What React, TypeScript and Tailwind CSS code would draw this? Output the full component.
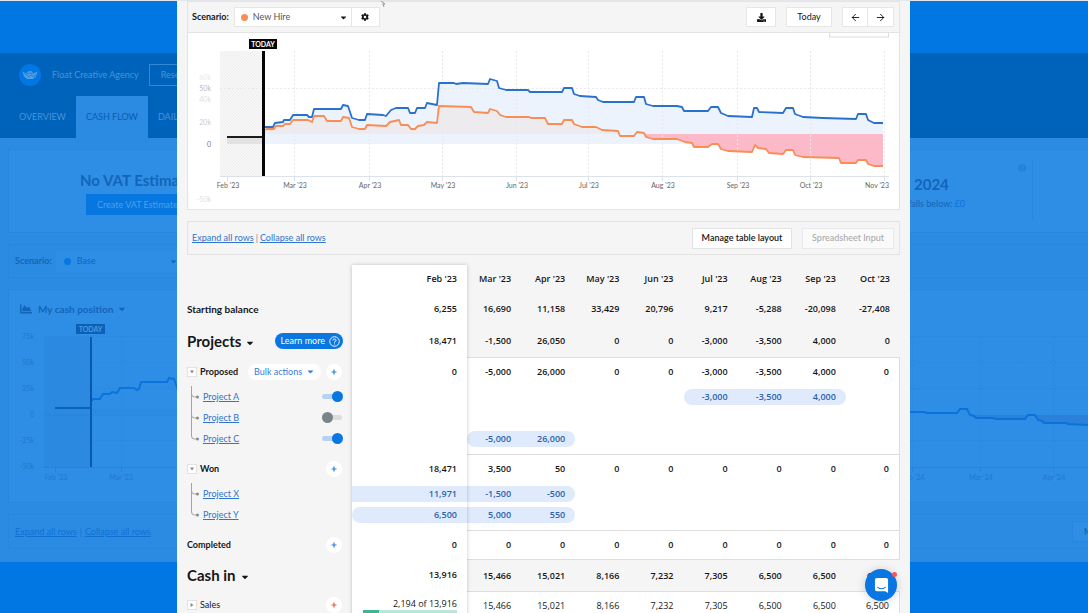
import React from 'react';
import { FaCog, FaDownload, FaCaretDown, FaChartArea } from 'react-icons/fa';
import { ArrowLeft, ArrowRight } from 'lucide-react';

type Line = [number, number][];

interface Row {
  kind: 'header' | 'balance' | 'section' | 'group' | 'project' | 'line';
  label: string;
  values: string[];
  add?: boolean;
  on?: boolean;
  last?: boolean;
  // first and last month that the project covers
  span?: [number, number];
  continued?: boolean;
}

const months = ["Feb '23", "Mar '23", "Apr '23", "May '23", "Jun '23", "Jul '23", "Aug '23", "Sep '23", "Oct '23"];

const rows: Row[] = [
  { kind: 'balance', label: 'Starting balance', values: ['6,255', '16,690', '11,158', '33,429', '20,796', '9,217', '-5,288', '-20,098', '-27,408'] },
  { kind: 'section', label: 'Projects', values: ['18,471', '-1,500', '26,050', '0', '0', '-3,000', '-3,500', '4,000', '0'] },
  { kind: 'group', label: 'Proposed', add: true, values: ['0', '-5,000', '26,000', '0', '0', '-3,000', '-3,500', '4,000', '0'] },
  { kind: 'project', label: 'Project A', on: true, span: [5, 7], values: ['', '', '', '', '', '-3,000', '-3,500', '4,000', ''] },
  { kind: 'project', label: 'Project B', on: false, values: ['', '', '', '', '', '', '', '', ''] },
  { kind: 'project', label: 'Project C', on: true, last: true, span: [1, 2], values: ['', '-5,000', '26,000', '', '', '', '', '', ''] },
  { kind: 'group', label: 'Won', add: true, values: ['18,471', '3,500', '50', '0', '0', '0', '0', '0', '0'] },
  { kind: 'project', label: 'Project X', span: [0, 2], continued: true, values: ['11,971', '-1,500', '-500', '', '', '', '', '', ''] },
  { kind: 'project', label: 'Project Y', last: true, span: [0, 2], values: ['6,500', '5,000', '550', '', '', '', '', '', ''] },
  { kind: 'group', label: 'Completed', add: true, values: ['0', '0', '0', '0', '0', '0', '0', '0', '0'] },
  { kind: 'section', label: 'Cash in', values: ['13,916', '15,466', '15,021', '8,166', '7,232', '7,305', '6,500', '6,500', '6,500'] },
  { kind: 'line', label: 'Sales', values: ['2,194 of 13,916', '15,466', '15,021', '8,166', '7,232', '7,305', '6,500', '6,500', '6,500'] },
];

const baseLine: Line = [
  [77, 94], [86, 94], [88, 90], [96, 89], [97, 87], [103, 87], [106, 82], [120, 82], [122, 84], [125, 84], [127, 76], [154, 76],
  [156, 72], [161, 73], [165, 85], [172, 87], [178, 87], [180, 81], [196, 82], [199, 83], [204, 77], [209, 75], [221, 75], [223, 80],
  [228, 80], [230, 75], [238, 75], [240, 70], [250, 72], [252, 50], [267, 50], [269, 51], [276, 50], [301, 51], [303, 46], [310, 48],
  [312, 55], [319, 57], [341, 57], [343, 59], [375, 59], [377, 55], [385, 55], [387, 61], [393, 63], [409, 64], [411, 67], [416, 69],
  [447, 69], [449, 64], [457, 64], [459, 71], [466, 73], [490, 73], [495, 74], [497, 78], [521, 78], [524, 74], [531, 74], [534, 80],
  [541, 83], [565, 84], [567, 75], [570, 75], [572, 79], [596, 80], [599, 75], [606, 75], [608, 81], [616, 84], [636, 85], [669, 86],
  [671, 81], [679, 81], [681, 87], [687, 90], [696, 90],
];

const hireLine: Line = [
  [77, 97], [80, 96], [87, 96], [89, 93], [96, 93], [98, 91], [103, 91], [106, 87], [121, 87], [125, 89], [127, 83], [137, 83],
  [140, 88], [154, 88], [156, 84], [162, 85], [165, 94], [172, 96], [178, 96], [180, 92], [199, 93], [203, 89], [212, 87], [214, 92],
  [221, 92], [224, 96], [228, 96], [231, 93], [237, 92], [240, 89], [250, 90], [252, 73], [284, 74], [287, 79], [301, 80], [303, 76],
  [310, 78], [313, 82], [319, 84], [342, 84], [344, 85], [358, 85], [361, 91], [375, 91], [377, 87], [385, 87], [387, 91], [395, 94],
  [409, 94], [415, 97], [431, 98], [433, 103], [447, 103], [450, 99], [457, 100], [459, 104], [466, 106], [490, 106], [498, 109],
  [505, 110], [507, 114], [521, 114], [525, 111], [531, 111], [534, 116], [541, 118], [565, 119], [568, 112], [571, 115], [579, 116],
  [582, 120], [596, 121], [599, 117], [606, 117], [608, 122], [616, 124], [652, 125], [654, 130], [669, 130], [671, 127], [679, 127],
  [681, 131], [687, 133], [696, 133],
];

const ticks: [number, string][] = [
  [40, "Feb '23"], [107, "Mar '23"], [182, "Apr '23"], [255, "May '23"], [329, "Jun '23"],
  [401, "Jul '23"], [475, "Aug '23"], [550, "Sep '23"], [623, "Oct '23"], [697, "Nov '23"],
];

const yLabels: [number, string, string][] = [
  [44, '60k', '#e9e9e9'], [55, '50k', '#b9b9b9'], [66, '40k', '#dddddd'], [89, '20k', '#cccccc'], [111, '0', '#777777'], [166, '-50k', '#dddddd'],
];

const toPoints = (line: Line) => line.map((p) => p.join(',')).join(' ');

const CashChart: React.FC = () => {
  const hireAbove = hireLine.filter(([x]) => x <= 431);
  const hireBelow = hireLine.filter(([x]) => x >= 459);
  return (
    <svg viewBox="1 0 711 176" className="block w-full" role="img" aria-label="Cash position chart">
      <defs>
        <pattern id="past" width="3" height="3" patternUnits="userSpaceOnUse">
          <path d="M0 3L3 0" stroke="#e6e6e6" strokeWidth="0.6" />
        </pattern>
      </defs>
      <rect x="642.500" y="-6" width="59" height="10" fill="#fff" stroke="#dcdcdc" />
      <rect x="33" y="18" width="43" height="125" fill="#f7f7f7" />
      <rect x="33" y="18" width="43" height="125" fill="url(#past)" />
      <rect x="40" y="104" width="36" height="7" fill="#e2e2e2" />
      <polygon points={`77,111 ${toPoints(baseLine)} 696,111`} fill="#ecf3fd" />
      <polygon points={`77,101 ${toPoints(hireAbove)} 433,101`} fill="#eeebee" />
      <polygon points={`457,101 ${toPoints(hireBelow)} 696,101`} fill="#fcb9c8" />
      <g stroke="#e6e9ee" strokeDasharray="2 2">
        {ticks.slice(1).map(([x]) => (
          <path key={x} d={`M${x}.5 18V143`} />
        ))}
        <path d="M33 55.500H697" />
      </g>
      <path d="M33 143.500H702" stroke="#dde1ea" />
      <g stroke="#dde1ea">
        {ticks.map(([x]) => (
          <path key={x} d={`M${x}.5 143v5`} />
        ))}
      </g>
      <polyline points={toPoints(baseLine)} fill="none" stroke="#2a70cd" strokeWidth="1.8" strokeLinejoin="round" />
      <polyline points={toPoints(hireLine)} fill="none" stroke="#f88d55" strokeWidth="1.8" strokeLinejoin="round" />
      <path d="M40 104H76" stroke="#1c1c1e" strokeWidth="2" />
      <rect x="75" y="18" width="3" height="125" fill="#050507" />
      <rect x="62" y="6" width="28" height="10" fill="#050507" />
      <text x="76" y="14" textAnchor="middle" fontSize="7" fontWeight="700" fill="#fff">TODAY</text>
      <g fontSize="7" fill="#666">
        {ticks.map(([x, label], i) => (
          <text key={label} x={i === ticks.length - 1 ? 702 : x + 1} y="155" textAnchor={i === ticks.length - 1 ? 'end' : 'middle'}>{label}</text>
        ))}
      </g>
      <g fontSize="7" textAnchor="end">
        {yLabels.map(([y, label, fill]) => (
          <text key={label} x="24" y={y + 3} fill={fill}>{label}</text>
        ))}
      </g>
    </svg>
  );
};

const TreeBranch: React.FC<{ last?: boolean }> = ({ last }) => (
  <svg viewBox="0 0 16 21" className="w-4 h-[21px] shrink-0" fill="none" stroke="#a3a3a3">
    <path d={last ? 'M4.500 0V8q0 3 3 3H10' : 'M4.500 0V21M4.500 8q0 3 3 3H10'} />
    <circle cx="10.500" cy="11" r="1.500" fill="#8b8b8b" stroke="none" />
  </svg>
);

const AddButton: React.FC<{ label: string; red?: boolean }> = ({ label, red }) => (
  <button aria-label={`Add to ${label}`} className={`ml-auto mr-[10px] size-4 rounded-full bg-white flex items-center justify-center ${red ? 'text-[#e0603f]' : 'text-[#2a7fdc]'}`}>
    <svg viewBox="0 0 6 6" className="size-[6px]" stroke="currentColor" strokeWidth="1.200">
      <path d="M3 0.500v5M0.500 3h5" />
    </svg>
  </button>
);

const Expander: React.FC<{ open: boolean; label: string }> = ({ open, label }) => (
  <button aria-label={`Toggle ${label}`} className="size-[10px] mr-[3px] bg-white border border-[#e2e2e2] flex items-center justify-center">
    <svg viewBox="0 0 6 6" className="size-[6px]" fill="#888">
      <path d={open ? 'M1 1.500h4L3 4.500z' : 'M1.500 1v4L4.500 3z'} />
    </svg>
  </button>
);

const RowLabel: React.FC<{ row: Row }> = ({ row }) => {
  if (row.kind === 'section') {
    return (
      <div className="flex items-center">
        <span className="text-[15px]">{row.label}</span>
        <FaCaretDown className="size-[10px] ml-1 mt-1" />
        {row.label === 'Projects' && (
          <button className="ml-auto mr-[9px] h-4 pl-[6px] pr-[3px] rounded-full bg-[#0a76e2] text-white text-[9px] font-normal flex items-center gap-1">
            Learn more
            <svg viewBox="0 0 12 12" className="size-[11px]" fill="none" stroke="#fff">
              <circle cx="6" cy="6" r="5.200" />
              <path d="M4.300 4.800Q4.300 3.200 6 3.200T7.700 4.800Q7.700 5.800 6 6.300V7.200M6 8.200v1" />
            </svg>
          </button>
        )}
      </div>
    );
  }
  if (row.kind === 'project') {
    return (
      <div className="flex items-center h-[21px]">
        <TreeBranch last={row.last} />
        <a href="#" className="text-[9px] font-normal text-[#2f74cf] underline">{row.label}</a>
        {row.on !== undefined && (
          <input
            type="checkbox"
            role="switch"
            aria-label={`Include ${row.label}`}
            defaultChecked={row.on}
            className="appearance-none ml-auto mr-[10px] relative w-5 h-[5px] rounded-full bg-[#dcdcdc] checked:bg-[#b5d2f3] before:absolute before:-top-[3px] before:left-0 checked:before:left-[10px] before:size-[11px] before:rounded-full before:bg-[#7b8488] checked:before:bg-[#0a76e2]"
          />
        )}
      </div>
    );
  }
  return (
    <div className="flex items-center">
      {(row.kind === 'line' || row.label === 'Proposed' || row.label === 'Won') && <Expander open={row.kind !== 'line'} label={row.label} />}
      <span className={row.kind === 'balance' ? 'text-[10px]' : row.kind === 'line' ? 'text-[9px] font-normal' : 'text-[9px]'}>{row.label}</span>
      {row.label === 'Proposed' && (
        <button className="ml-[10px] h-4 px-[6px] rounded-full bg-white text-[9px] font-normal text-[#2f7bd9] flex items-center gap-1">
          Bulk actions
          <FaCaretDown className="size-[9px]" />
        </button>
      )}
      {(row.add || row.kind === 'line') && <AddButton label={row.label} red={row.kind === 'line'} />}
    </div>
  );
};

const rowHeight = {
  header: 'h-7',
  balance: 'h-8',
  section: 'h-8',
  group: 'h-[29px]',
  project: 'h-[21px]',
  line: 'h-7',
};

const CashTable: React.FC = () => (
  <div className="relative mt-[10px]">
    <table className="w-full table-fixed border-separate border-spacing-0 text-[9px] text-[#161618]">
      <colgroup>
        <col className="w-[165px]" />
        <col className="w-[115px]" />
        {months.slice(1).map((m) => <col key={m} />)}
      </colgroup>
      <thead>
        <tr className="font-['Open_Sans',sans-serif]">
          <td className="h-7" />
          {months.map((month, i) => (
            <th key={month} scope="col" className={`h-7 pr-[10px] text-right font-semibold ${i === 0 ? 'bg-white' : ''}`}>{month}</th>
          ))}
        </tr>
      </thead>
      <tbody>
        {rows.map((row) => {
          const white = row.kind !== 'balance' && row.kind !== 'section';
          const ruled = row.kind === 'group' || row.kind === 'line' || row.label === 'Cash in';
          return (
            <tr key={row.label}>
              <th scope="row" className={`p-0 text-left font-bold align-middle ${rowHeight[row.kind]} ${row.last ? 'pb-[5px]' : ''}`}>
                <RowLabel row={row} />
              </th>
              {row.values.map((value, i) => {
                const inSpan = row.span && i >= row.span[0] && i <= row.span[1];
                const edge = i === row.values.length - 1 && white ? 'border-r border-r-[#dedede]' : '';
                return (
                  <td
                    key={i}
                    className={`p-0 text-right font-['Open_Sans',sans-serif] ${row.kind === 'line' ? 'font-normal' : 'font-semibold'} ${i === 0 || white ? 'bg-white' : ''} ${ruled && i > 0 ? 'border-t border-t-[#dedede]' : ''} ${edge} ${row.last ? 'pb-[5px]' : ''}`}
                  >
                    {row.kind === 'project' ? (
                      <div
                        className={`h-4 leading-4 pr-[10px] ${inSpan ? 'bg-[#dfebfc] text-[#2b62ad]' : ''} ${inSpan && i === row.span![0] && !row.continued ? 'rounded-l-full' : ''} ${inSpan && i === row.span![1] ? 'rounded-r-full' : ''}`}
                      >
                        {value}
                      </div>
                    ) : (
                      <div className="pr-[10px]">{value}</div>
                    )}
                    {row.kind === 'line' && i === 0 && (
                      <div className="ml-[11px] mr-[10px] h-[3px] bg-[#b9e8da]">
                        <div className="h-full w-4 bg-[#3bb893]" />
                      </div>
                    )}
                  </td>
                );
              })}
            </tr>
          );
        })}
      </tbody>
    </table>
    {/* lifted card around the current month */}
    <div className="absolute inset-y-0 left-[165px] w-[115px] shadow-[0_0_4px_rgba(0,0,0,0.22)] pointer-events-none" />
  </div>
);

const BackdropLeft: React.FC = () => (
  <aside className="min-w-0 overflow-hidden whitespace-nowrap pt-[52px] text-[#1265b8]">
    <div className="h-[85px] bg-[#0063bb] text-[#4493da] text-[9px]">
      <div className="h-[43px] pl-[19px] flex items-center">
        <svg viewBox="0 0 22 22" className="size-[22px] shrink-0">
          <circle cx="11" cy="11" r="11" fill="#0077e2" />
          <path d="M3.500 7.500l4 2 1.500-2 2-0.500 2 0.500 1.500 2 4-2-1.500 5-3 2.500H8L5 12.500z" fill="#4f9fe6" />
          <path d="M5 9l5 4 2-2 3 2 2-3M8 10l3-1 3 1" fill="none" stroke="#1b78ce" strokeWidth="0.800" />
        </svg>
        <span className="ml-[11px]">Float Creative Agency</span>
        <button className="ml-[10px] h-[22px] px-[11px] border border-[#3388d8]">Reset</button>
      </div>
      <nav className="h-[42px] pl-[9px] flex">
        <a href="#" className="px-[10px] leading-[42px]">OVERVIEW</a>
        <a href="#" className="px-[10px] leading-[42px] bg-[#2b8be3] text-[#0b5bae]">CASH FLOW</a>
        <a href="#" className="px-[10px] leading-[42px]">DAILY</a>
      </nav>
    </div>
    <div className="h-[424px] bg-[#2b8be3] pt-[11px] pl-2 flex flex-col gap-[11px]">
      <section className="h-[84px] w-[360px] shrink-0 pl-[71px] pt-5 border border-[#2886de] bg-[#2e8ee5]">
        <h2 className="text-[15px] leading-5 font-bold">No VAT Estimate</h2>
        <button className="ml-[6px] h-[21px] px-[11px] bg-[#0677e0] text-[#4f9fe8] text-[9px]">Create VAT Estimate</button>
      </section>
      <section className="h-[34px] w-[360px] shrink-0 pl-[6px] border border-[#2886de] flex items-center text-[9px]">
        <label htmlFor="base-scenario" className="font-bold">Scenario:</label>
        <div className="ml-1 h-[22px] w-[126px] bg-[#2e8ee5] flex items-center pl-2 pr-[4px]">
          <span className="size-[7px] rounded-full bg-[#0677e0]" />
          <select id="base-scenario" className="appearance-none flex-1 pl-[6px] outline-none">
            <option>Base</option>
          </select>
          <FaCaretDown className="size-[9px]" />
        </div>
      </section>
      <section className="h-[214px] w-[360px] shrink-0 border border-[#2886de] bg-[#2e8ee5]">
        <h3 className="h-[34px] pl-[11px] pt-[4px] flex items-center text-[10px] font-bold">
          <FaChartArea className="size-[12px] mr-[6px]" />
          My cash position
          <FaCaretDown className="size-[10px] ml-1" />
        </h3>
        <svg viewBox="0 0 170 165" className="block w-[170px] h-[165px]">
          <rect x="35" y="13" width="47" height="130" fill="#2b8ae0" />
          <g stroke="#2a87dd" strokeDasharray="2 2">
            <path d="M35 12.500H170M35 38.500H170M35 64.500H170M35 116.500H170M112.500 12V142" />
          </g>
          <path d="M35 91H170" stroke="#2885dc" />
          <path d="M35 143.500H170M46.500 143v5M112.500 143v5" stroke="#2683da" />
          <rect x="82" y="85" width="88" height="6" fill="#2b8ae1" />
          <path d="M46 84H82" stroke="#0b62bb" strokeWidth="2" />
          <polyline points="82,78 84,75 91,75 94,70 101,70 103,68 108,69 111,64 125,64 128,66 130,65 132,58 158,58 160,54 165,55 169,66" fill="none" stroke="#0a74dc" strokeWidth="2" />
          <rect x="81" y="13" width="2" height="130" fill="#0759ae" />
          <rect x="67" y="0" width="29" height="10" fill="#0c60b5" />
          <text x="81.500" y="8" textAnchor="middle" fontSize="7" fontWeight="700" fill="#4d9ce6">TODAY</text>
          <g fontSize="7" fill="#1f78cd" textAnchor="end">
            <text x="25" y="15">75k</text>
            <text x="25" y="41">50k</text>
            <text x="25" y="67">25k</text>
            <text x="25" y="93">0</text>
            <text x="25" y="119">-25k</text>
            <text x="25" y="145">-50k</text>
          </g>
          <g fontSize="7" fill="#1f78cd" textAnchor="middle">
            <text x="47" y="156">Feb '23</text>
            <text x="112" y="156">Mar '23</text>
          </g>
        </svg>
      </section>
      <section className="h-[35px] w-[360px] shrink-0 pl-[6px] border border-[#2886de] flex items-center gap-[3px] text-[9px] text-[#0f70d2]">
        <a href="#" className="underline">Expand all rows</a>
        <span>|</span>
        <a href="#" className="underline">Collapse all rows</a>
      </section>
    </div>
  </aside>
);

const BackdropRight: React.FC = () => (
  <aside className="min-w-0 overflow-hidden whitespace-nowrap pt-[52px] text-[#1265b8]">
    <div className="h-[85px] bg-[#0063bb]" />
    <div className="h-[424px] bg-[#2b8be3] pt-[11px] flex flex-col gap-[11px]">
      <section className="h-[84px] shrink-0 flex border-y border-[#2886de] bg-[#2e8ee5]">
        <div className="flex-1 pt-6">
          <h2 className="pl-1 text-[15px] leading-5 font-bold">2024</h2>
          <p className="w-[55px] flex justify-end overflow-hidden text-[9px] leading-5">
            <span>falls below:</span>
            <span className="ml-[2px] text-[#0a72d8]">£0</span>
          </p>
        </div>
        <button aria-label="Help" className="mt-[14px] mr-[6px] size-2 rounded-full bg-[#2382da] text-[#2e8ee5] text-[7px] leading-[8px] font-bold">?</button>
        <div className="my-[11px] w-[56px] border-l border-[#2886de]" />
      </section>
      <section className="h-[34px] shrink-0 border-y border-[#2886de]" />
      <section className="h-[214px] shrink-0 pt-[34px] border-y border-[#2886de] bg-[#2e8ee5]">
        <svg viewBox="0 0 178 165" className="block w-[178px] h-[165px]">
          <g stroke="#2a87dd" strokeDasharray="2 2">
            <path d="M0 12.500H178M0 38.500H178M0 64.500H178M0 116.500H178M2.500 12V142M70.500 12V142M143.500 12V142" />
          </g>
          <path d="M0 143.500H178M2.500 143v5M70.500 143v5M143.500 143v5" stroke="#2683da" />
          <polygon points="60,91 66,94 115,95 118,91 125,91 128,96 134,99 178,101 178,91" fill="#2b80d9" />
          <polyline points="0,88 15,88 17,89 47,89 50,85 57,85 60,91 64,92 66,94 83,94 85,95 115,95 118,91 125,91 128,96 132,97 134,99 156,99 158,100 178,101" fill="none" stroke="#0a72da" strokeWidth="2" />
          <g fontSize="7" fill="#1f78cd" textAnchor="middle">
            <text x="3" y="156">Feb '24</text>
            <text x="71" y="156">Mar '24</text>
            <text x="144" y="156">Apr '24</text>
          </g>
        </svg>
      </section>
      <section className="h-[35px] shrink-0 border-y border-[#2886de] flex items-center">
        <button className="ml-[162px] h-[21px] px-[11px] border border-[#2886de] bg-[#2e8ee5] text-[9px] font-semibold">Manage table layout</button>
      </section>
    </div>
  </aside>
);

const toolButton = 'h-5 bg-white border border-[#e6e6e6] flex items-center justify-center';

export default function App() {
  return (
    <div className="h-screen overflow-hidden flex flex-col bg-[#0077e3] font-['Lato','Open_Sans',sans-serif]">
      <div className="h-px shrink-0 bg-[#e4e6e9]" />
      <div className="relative flex-1 min-h-0 grid grid-cols-[177px_minmax(0,1fr)_178px]">
        <BackdropLeft />

        <main className="relative min-w-0 overflow-hidden bg-[#f5f5f5] px-[10px] text-[#161618]">
          <div className="h-[31px] flex items-center pl-[4px] pr-[5px] border border-b-0 border-[#e3e3e3] text-[9px]">
            <label htmlFor="scenario" className="font-bold">Scenario:</label>
            <div className="ml-[5px] h-5 w-[118px] bg-white border border-[#e6e6e6] flex items-center pl-[6px] pr-[3px]">
              <span className="size-[7px] rounded-full bg-[#f88d55]" />
              <select id="scenario" className="appearance-none flex-1 pl-[5px] text-[#555] outline-none">
                <option>New Hire</option>
              </select>
              <FaCaretDown className="size-[9px]" />
            </div>
            <button aria-label="Scenario settings" className={`${toolButton} w-7 border-l-0`}><FaCog className="size-2" /></button>
            <button aria-label="Download" className={`${toolButton} ml-auto w-[30px]`}><FaDownload className="size-[9px]" /></button>
            <button className={`${toolButton} ml-[10px] w-[46px]`}>Today</button>
            <button aria-label="Previous" className={`${toolButton} ml-[10px] w-[26px]`}><ArrowLeft className="size-[11px]" /></button>
            <button aria-label="Next" className={`${toolButton} w-[26px] border-l-0`}><ArrowRight className="size-[11px]" /></button>
          </div>
          <svg viewBox="0 0 6 6" className="absolute top-0 left-[203px] size-[6px]" stroke="#999" fill="#ddd">
            <path d="M1 0l4 3H3l1 3" />
          </svg>

          <div className="bg-white border border-[#e3e3e3]">
            <CashChart />
          </div>

          <div className="mt-[11px] h-[34px] flex items-center pl-[4px] pr-[5px] border border-[#e3e3e3] text-[9px]">
            <a href="#" className="text-[#2f74cf] underline">Expand all rows</a>
            <span className="mx-[2px] text-[#888]">|</span>
            <a href="#" className="text-[#2f74cf] underline">Collapse all rows</a>
            <button className="ml-auto h-[21px] w-[100px] bg-white border border-[#e3e3e3] font-semibold">Manage table layout</button>
            <button disabled className="ml-[10px] h-[21px] w-[92px] bg-[#fafafa] border border-[#e9e9e9] text-[#a6a6a6]">Spreadsheet Input</button>
          </div>

          <CashTable />

          <button aria-label="Open chat" className="absolute right-[13px] bottom-3 size-8 rounded-full bg-[#0a76e2] shadow-[0_1px_10px_rgba(0,0,0,0.18)] flex items-center justify-center">
            <svg viewBox="0 0 16 18" className="w-[15px] h-[17px]">
              <path d="M3 1h10a2 2 0 012 2v14l-3-2H3a2 2 0 01-2-2V3a2 2 0 012-2z" fill="#fff" />
              <path d="M4 11q4 3 8 0" fill="none" stroke="#0a76e2" strokeWidth="1.200" strokeLinecap="round" />
            </svg>
            <span className="absolute top-[3px] right-0 size-[5px] rounded-full bg-[#f4565b]" />
          </button>
        </main>

        <BackdropRight />
      </div>
    </div>
  );
}
